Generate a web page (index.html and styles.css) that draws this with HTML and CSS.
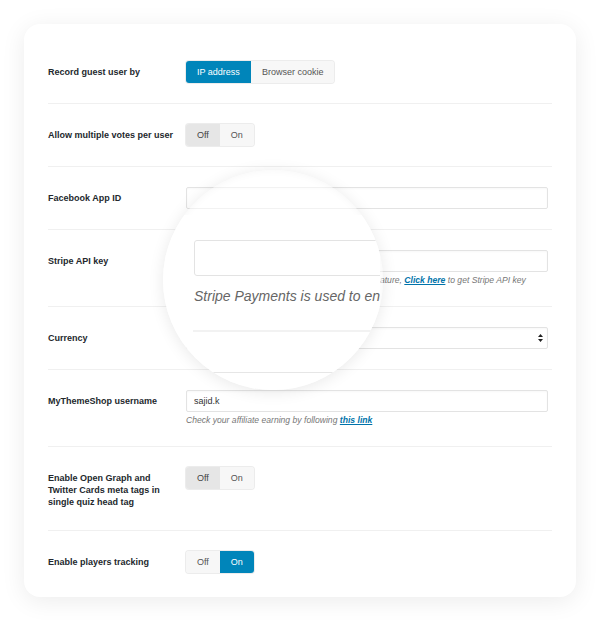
FILE: index.html
```html
<!DOCTYPE html>
<html lang="en">
<head>
  <meta charset="UTF-8">
  <meta name="viewport" content="width=device-width, initial-scale=1.0">
  <title>Quiz Settings</title>
  <link rel="stylesheet" href="styles.css">
</head>
<body>
  <div class="settings-card">

    <!-- magnifier lens over the Stripe row -->
    <div class="lens">
      <div class="lens-view">
        <div class="lens-input"></div>
        <p class="lens-text">Stripe Payments is used to enable the paid quiz feature</p>
        <div class="lens-line"></div>
        <div class="lens-select"></div>
      </div>
    </div>

    <div class="setting-row">
      <div class="setting-label">Record guest user by</div>
      <div class="setting-field">
        <div class="btn-group">
          <button class="btn-option active-blue">IP address</button>
          <button class="btn-option">Browser cookie</button>
        </div>
      </div>
    </div>

    <div class="setting-row">
      <div class="setting-label">Allow multiple votes per user</div>
      <div class="setting-field">
        <div class="btn-group">
          <button class="btn-option active-gray">Off</button>
          <button class="btn-option">On</button>
        </div>
      </div>
    </div>

    <div class="setting-row">
      <div class="setting-label">Facebook App ID</div>
      <div class="setting-field">
        <input class="text-input" type="text" value="">
      </div>
    </div>

    <div class="setting-row">
      <div class="setting-label">Stripe API key</div>
      <div class="setting-field">
        <input class="text-input" type="text" value="">
        <p class="field-desc">Stripe Payments is used to enable the Paid Quiz feature, <a href="#">Click here</a> to get Stripe API key</p>
      </div>
    </div>

    <div class="setting-row">
      <div class="setting-label">Currency</div>
      <div class="setting-field">
        <div class="select-box">
          <svg class="select-arrows" width="5" height="8" viewBox="0 0 5 8"><path d="M2.5 0L5 3H0z M2.5 8L0 5h5z" fill="#222"/></svg>
        </div>
      </div>
    </div>

    <div class="setting-row">
      <div class="setting-label">MyThemeShop username</div>
      <div class="setting-field">
        <input class="text-input" type="text" value="sajid.k">
        <p class="field-desc">Check your affiliate earning by following <a href="#">this link</a></p>
      </div>
    </div>

    <div class="setting-row">
      <div class="setting-label">Enable Open Graph and Twitter Cards meta tags in single quiz head tag</div>
      <div class="setting-field">
        <div class="btn-group">
          <button class="btn-option active-gray">Off</button>
          <button class="btn-option">On</button>
        </div>
      </div>
    </div>

    <div class="setting-row">
      <div class="setting-label">Enable players tracking</div>
      <div class="setting-field">
        <div class="btn-group">
          <button class="btn-option">Off</button>
          <button class="btn-option active-blue">On</button>
        </div>
      </div>
    </div>

  </div>
</body>
</html>
```

FILE: styles.css
```css
body {
  margin: 0;
  padding: 24px;
  background: #fff;
  font-family: 'Liberation Sans', Arial, sans-serif;
}

.settings-card {
  position: relative;
  width: 552px;
  box-sizing: border-box;
  padding: 17px 24px 4px;
  background: #fff;
  border-radius: 16px;
  box-shadow: 0 4px 24px rgba(0, 0, 0, 0.08);
  overflow: hidden;
}

.setting-row {
  display: flex;
  align-items: flex-start;
  padding: 20px 0;
  border-bottom: 1px solid #f0f0f0;
}

.setting-row:last-child { border-bottom: none; }

.setting-label {
  flex: 0 0 138px;
  box-sizing: border-box;
  padding: 5px 8px 2px 0;
  font-size: 9px;
  line-height: 12px;
  font-weight: bold;
  color: #23282d;
}

.setting-field {
  flex: 1;
  margin-right: 4px;
}

.btn-group {
  display: inline-flex;
  height: 22px;
  border-radius: 3px;
  box-shadow: 0 0 0 1px #ececec;
  background: #f7f7f7;
  overflow: hidden;
}

.btn-option {
  border: none;
  margin: 0;
  padding: 0 11px;
  background: #f7f7f7;
  color: #555;
  font-family: inherit;
  font-size: 9px;
  line-height: 22px;
}

.btn-option.active-blue { background: #0085ba; color: #fff; }
.btn-option.active-gray { background: #e6e6e6; color: #444; }

.text-input, .select-box {
  display: block;
  width: 100%;
  height: 22px;
  box-sizing: border-box;
  margin: 0;
  padding: 0 7px;
  border: 1px solid #e3e3e3;
  border-radius: 2px;
  box-shadow: inset 0 1px 2px rgba(0, 0, 0, 0.03);
  background: #fff;
  font-family: inherit;
  font-size: 9px;
  color: #333;
}

.select-box {
  display: flex;
  justify-content: flex-end;
  align-items: center;
  padding: 0 4px;
}

.select-arrows { display: block; }

.field-desc {
  margin: 3px 0 0;
  font-size: 8.6px;
  line-height: 11px;
  font-style: italic;
  color: #777;
}

.field-desc a {
  color: #0073aa;
  font-weight: bold;
}

.lens {
  position: absolute;
  z-index: 2;
  left: 139px;
  top: 146px;
  width: 220px;
  height: 220px;
  border-radius: 50%;
  overflow: hidden;
  background: rgba(255, 255, 255, 0.55);
  box-shadow: 0 2px 16px rgba(0, 0, 0, 0.09), inset 0 0 8px rgba(0, 0, 0, 0.04);
}

.lens-view {
  position: absolute;
  left: 0;
  top: 45px;
  width: 217px;
  height: 180px;
  background: #fff;
  overflow: hidden;
}

.lens-input {
  position: absolute;
  left: 31px;
  top: 25px;
  width: 300px;
  height: 36px;
  box-sizing: border-box;
  border: 1px solid #e3e3e3;
  border-radius: 3px;
}

.lens-text {
  position: absolute;
  left: 31px;
  top: 72px;
  margin: 0;
  white-space: nowrap;
  font-size: 14px;
  line-height: 18px;
  font-style: italic;
  color: #666;
}

.lens-line {
  position: absolute;
  left: 30px;
  right: 0;
  top: 115px;
  border-top: 2px solid #f2f2f2;
}

.lens-select {
  position: absolute;
  left: 31px;
  top: 157px;
  width: 300px;
  height: 36px;
  border-top: 1px solid #e6e6e6;
}
```
